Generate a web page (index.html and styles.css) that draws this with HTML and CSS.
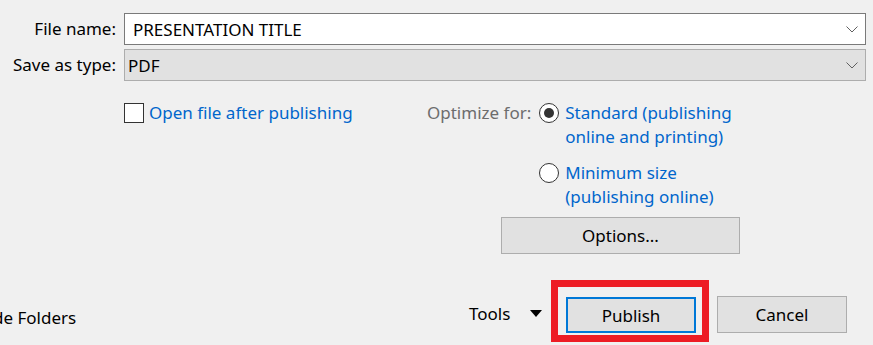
FILE: index.html
```html
<!DOCTYPE html>
<html lang="en">
<head>
  <meta charset="UTF-8" />
  <title>Publish as PDF</title>
  <link rel="stylesheet" href="styles.css">
</head>
<body>
  <div class="fields">
    <label class="field-label" for="fname">File name:</label>
    <div class="combo combo-edit">
      <span id="fname">PRESENTATION TITLE</span>
      <svg class="chev" width="12" height="7" viewBox="0 0 12 7"><path d="M0.5 0.5 L6 6 L11.5 0.5" fill="none" stroke="#606060" stroke-width="1"/></svg>
    </div>
    <label class="field-label" for="ftype">Save as type:</label>
    <div class="combo combo-list">
      <span id="ftype">PDF</span>
      <svg class="chev" width="12" height="7" viewBox="0 0 12 7"><path d="M0.5 0.5 L6 6 L11.5 0.5" fill="none" stroke="#606060" stroke-width="1"/></svg>
    </div>
  </div>

  <div class="options">
    <div class="check-row">
      <span class="checkbox"></span>
      <span class="link-text">Open file after publishing</span>
    </div>
    <div class="optimize">
      <span class="opt-label">Optimize for:</span>
      <div class="radios">
        <div class="radio-row">
          <span class="radio checked"></span>
          <span class="link-text">Standard (publishing<br>online and printing)</span>
        </div>
        <div class="radio-row">
          <span class="radio"></span>
          <span class="link-text">Minimum size<br>(publishing online)</span>
        </div>
      </div>
    </div>
  </div>

  <button class="btn btn-options">Options...</button>

  <div class="footer">
    <span class="hide-folders">Hide Folders</span>
    <span class="tools">Tools
      <svg width="12" height="7" viewBox="0 0 12 7"><path d="M0 0 H12 L6 7 Z" fill="#000"/></svg>
    </span>
    <div class="highlight">
      <button class="btn btn-default">Publish</button>
    </div>
    <button class="btn btn-cancel">Cancel</button>
  </div>
</body>
</html>
```

FILE: styles.css
```css
body {
  margin: 0;
  background-color: #f0f0f0;
  font-family: "Noto Sans", "Open Sans", sans-serif;
  font-size: 17px;
  color: #000;
  overflow: hidden;
  width: 873px;
  height: 345px;
}

.fields {
  display: grid;
  grid-template-columns: 116px 742px;
  column-gap: 8px;
  row-gap: 4px;
  padding-top: 13px;
}

.field-label {
  text-align: right;
  line-height: 32px;
  white-space: nowrap;
}

.combo {
  box-sizing: border-box;
  height: 32px;
  display: flex;
  align-items: center;
  justify-content: space-between;
  padding: 0 7px 0 8px;
}

.combo-edit {
  background: #fff;
  border: 1px solid #7a7a7a;
}

.combo-list {
  background: #e1e1e1;
  border: 1px solid #adadad;
  padding-left: 3px;
}

.options {
  display: flex;
  margin-top: 22px;
}

.check-row {
  display: flex;
  align-items: center;
  margin-left: 124px;
  width: 303px;
  height: 20px;
}

.checkbox {
  box-sizing: border-box;
  width: 20px;
  height: 20px;
  border: 1px solid #333;
  background: #fff;
  margin-right: 5px;
}

.link-text {
  color: #0066cc;
  line-height: 24px;
}

.optimize {
  display: flex;
}

.opt-label {
  color: #6d6d6d;
  line-height: 20px;
  margin-right: 8px;
}

.radios {
  display: flex;
  flex-direction: column;
  gap: 12px;
  margin-top: -2px;
}

.radio-row {
  display: flex;
  align-items: flex-start;
}

.radio {
  box-sizing: border-box;
  width: 20px;
  height: 20px;
  border: 1px solid #333;
  border-radius: 50%;
  background: #fff;
  margin: 2px 6px 0 0;
  display: flex;
  align-items: center;
  justify-content: center;
}

.radio.checked::after {
  content: "";
  width: 10px;
  height: 10px;
  border-radius: 50%;
  background: #333;
}

.btn {
  box-sizing: border-box;
  font-family: inherit;
  font-size: 17px;
  color: #000;
  background: #e1e1e1;
  border: 1px solid #adadad;
  padding: 0;
  height: 37px;
}

.btn-options {
  display: block;
  width: 239px;
  margin: 8px 0 0 501px;
}

.footer {
  display: flex;
  align-items: flex-start;
  margin-top: 26px;
}

.hide-folders {
  flex: none;
  width: 493px;
  margin-left: -24px;
  margin-top: 26px;
  white-space: nowrap;
}

.tools {
  flex: none;
  width: 73px;
  display: flex;
  align-items: center;
  justify-content: space-between;
  margin-top: 22px;
}

.highlight {
  flex: none;
  border: 7px solid #ed1c24;
  padding: 10px 6px 2px 8px;
  margin-left: 9px;
}

.btn-default {
  display: block;
  width: 130px;
  height: 36px;
  border: 2px solid #0078d7;
}

.btn-cancel {
  flex: none;
  width: 130px;
  margin: 16px 0 0 8px;
}
```
